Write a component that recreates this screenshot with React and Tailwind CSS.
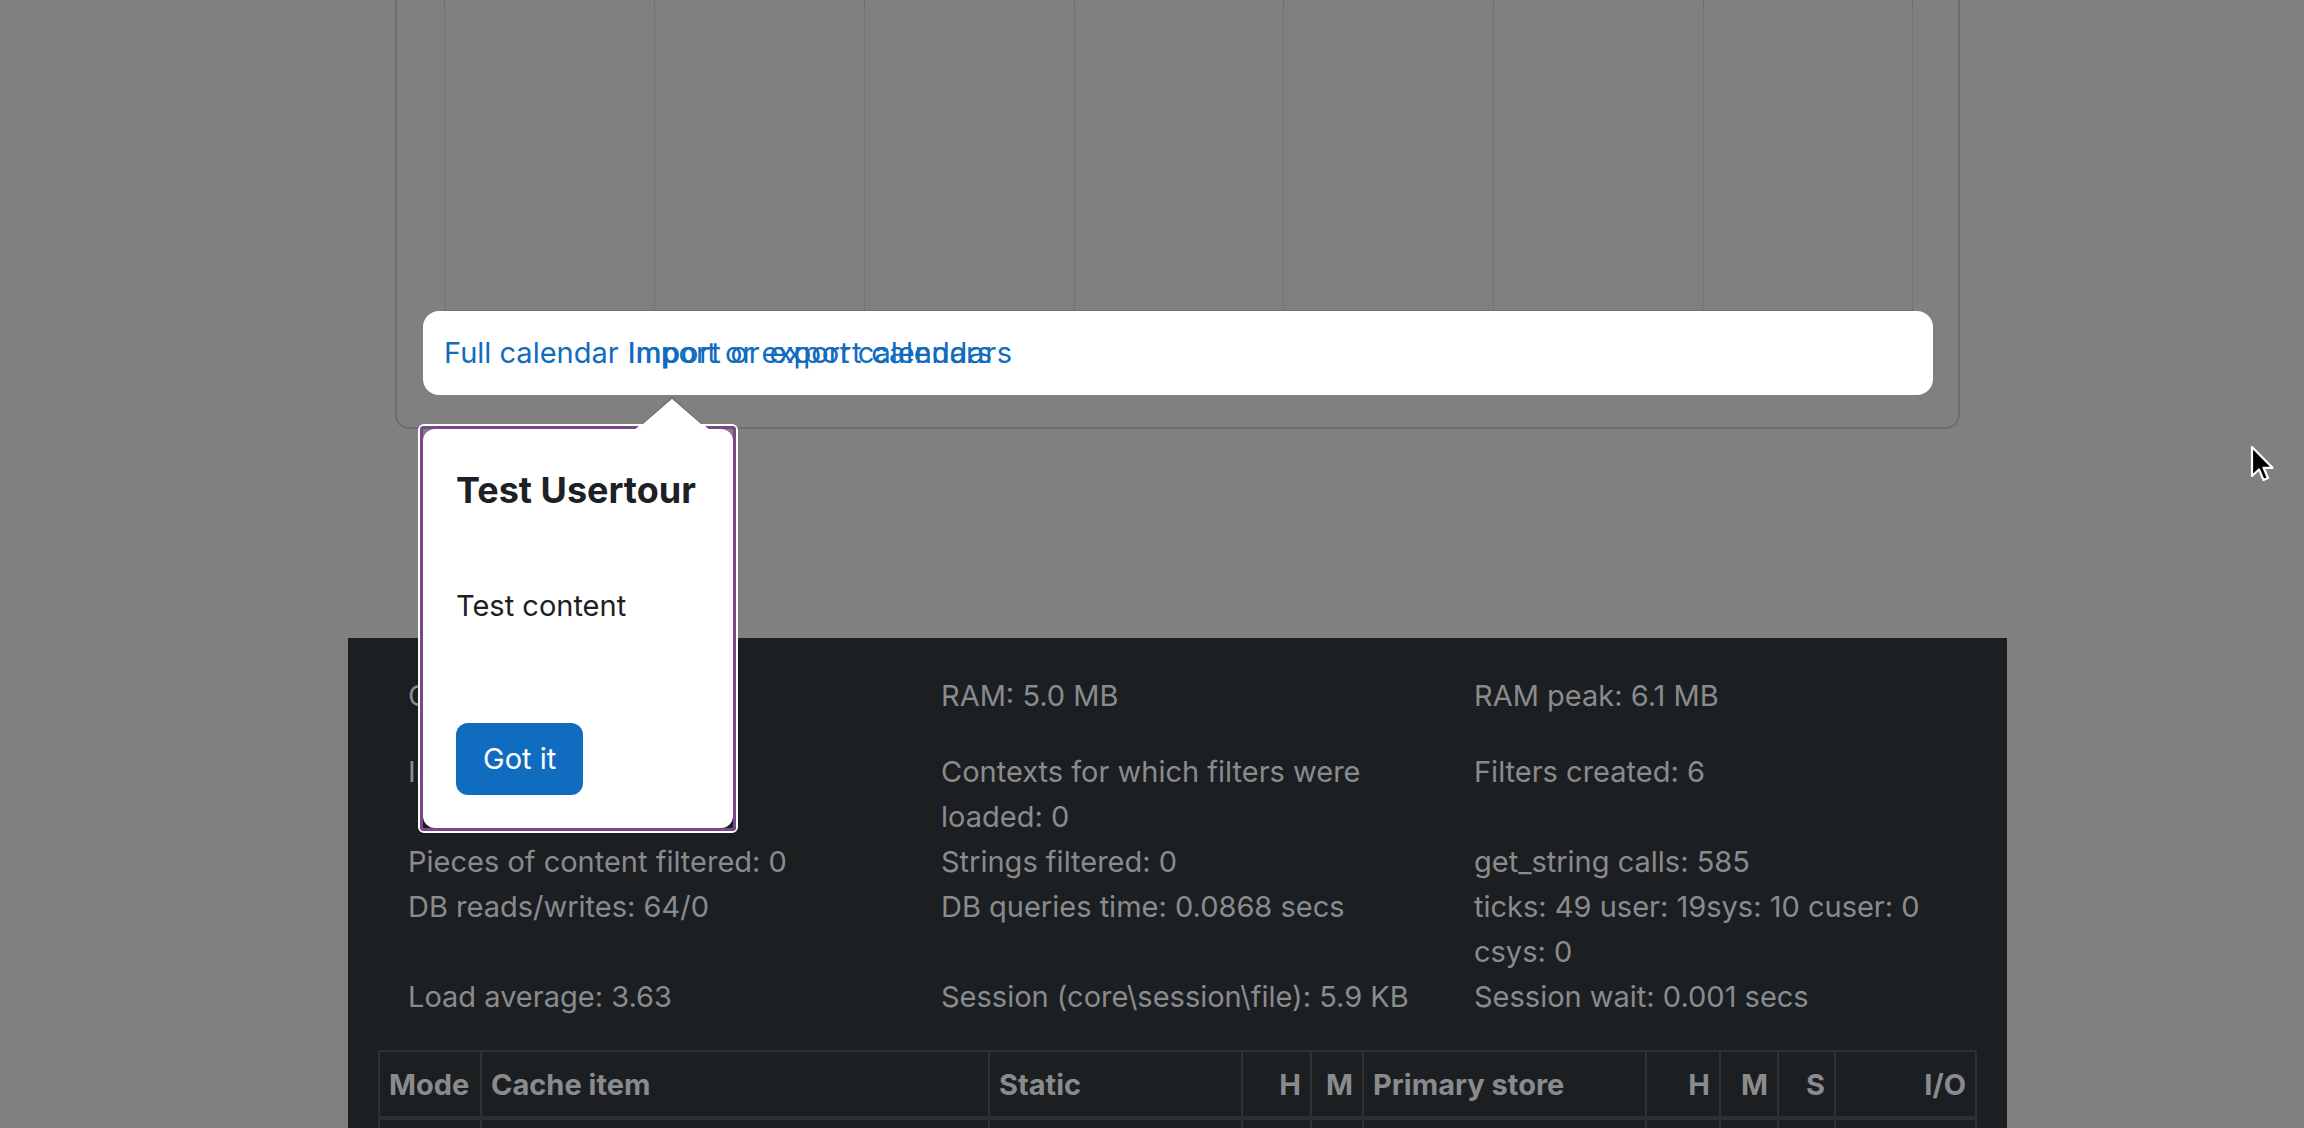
import React from "react";

const perfRows = [
  { cls: "mb-[31px]", cells: [["CPU time: 0.40 secs"], ["RAM: 5.0 MB"], ["RAM peak: 6.1 MB"]] },
  { cls: "", cells: [["Included 1102 files"], ["Contexts for which filters were", "loaded: 0"], ["Filters created: 6"]] },
  { cls: "", cells: [["Pieces of content filtered: 0"], ["Strings filtered: 0"], ["get_string calls: 585"]] },
  { cls: "", cells: [["DB reads/writes: 64/0"], ["DB queries time: 0.0868 secs"], ["ticks: 49 user: 19sys: 10 cuser: 0", "csys: 0"]] },
  { cls: "", cells: [["Load average: 3.63"], ["Session (core\\session\\file): 5.9 KB"], ["Session wait: 0.001 secs"]] },
];

const cacheCols = [
  { label: "Mode", w: "w-[102px]", align: "text-left" },
  { label: "Cache item", w: "w-[508px]", align: "text-left" },
  { label: "Static", w: "w-[253px]", align: "text-left" },
  { label: "H", w: "w-[69px]", align: "text-right" },
  { label: "M", w: "w-[52px]", align: "text-right" },
  { label: "Primary store", w: "w-[283px]", align: "text-left" },
  { label: "H", w: "w-[74px]", align: "text-right" },
  { label: "M", w: "w-[58px]", align: "text-right" },
  { label: "S", w: "w-[57px]", align: "text-right" },
  { label: "I/O", w: "w-[141px]", align: "text-right" },
];

function CalendarBlock() {
  return (
    <div className="ml-[395px] w-[1565px] h-[429px] border-x-2 border-b-2 border-[#6e6e6e] rounded-b-[14px]">
      {/* month grid, only the lower part shows */}
      <div className="ml-[47px] w-[1469px] h-[311px] grid grid-cols-7 border-b border-dotted border-[#666666]">
        {[0, 1, 2, 3, 4, 5, 6].map((i) => (
          <div
            key={i}
            className={
              "border-l border-dotted border-[#666666] " +
              (i === 6 ? "border-r" : "")
            }
          />
        ))}
      </div>
      {/* highlighted footer links */}
      <div className="ml-[26px] w-[1510px] h-[84px] bg-white rounded-[16px] flex items-center pl-[21px] text-[29px] text-[#0f6cbf]">
        <span>Full calendar</span>
        <span className="relative ml-[9px]">
          <span>Import or export calendars</span>
          <span className="absolute left-0 top-0 whitespace-nowrap tracking-[0.8px]">
            Import or export calendars
          </span>
        </span>
      </div>
    </div>
  );
}

function PerfInfo() {
  return (
    <div className="mt-[209px] ml-[348px] w-[1659px] bg-[#1c1f22] pt-[35px] text-[29px] leading-[45px] text-[#8a8b8d]">
      <div className="pl-[60px]">
        {perfRows.map((row, r) => (
          <div key={r} className={"grid grid-cols-[533px_533px_533px] " + row.cls}>
            {row.cells.map((lines, c) => (
              <div key={c}>
                {lines.map((l, k) => (
                  <div key={k} className="whitespace-nowrap">{l}</div>
                ))}
              </div>
            ))}
          </div>
        ))}
      </div>

      <table className="mt-[31px] ml-[30px] w-[1598px] table-fixed border-collapse">
        <thead>
          <tr className="h-[67px]">
            {cacheCols.map((col, i) => (
              <th
                key={i}
                className={
                  col.w +
                  " " +
                  col.align +
                  " border-2 border-b-4 border-[#2d3034] px-[9px] font-bold text-[29px] text-[#8a8b8d]"
                }
              >
                {col.label}
              </th>
            ))}
          </tr>
        </thead>
        <tbody>
          <tr className="h-[60px]">
            {cacheCols.map((col, i) => (
              <td key={i} className="border-2 border-[#2d3034]" />
            ))}
          </tr>
        </tbody>
      </table>
    </div>
  );
}

function TourStep() {
  return (
    <>
      {/* popover arrow */}
      <svg
        className="absolute left-[630px] top-[397px] z-20"
        width="84"
        height="36"
        viewBox="0 0 84 36"
      >
        <polygon points="42,1 3,34 81,34" fill="#ffffff" />
        <path d="M12 27 L42 1 L72 27" fill="none" stroke="#6b6b6b" strokeWidth="1.2" />
      </svg>

      <div className="absolute left-[418px] top-[424px] w-[320px] h-[409px] z-10 rounded-[6px] border-2 border-white">
        <div className="w-full h-full rounded-[4px] border-[3px] border-[#7a4789]">
          <div className="w-full h-full bg-white rounded-[12px] px-[33px] pt-[40px] text-[#1d2125]">
            <h3 className="text-[36px] leading-[43px] font-bold">Test Usertour</h3>
            <p className="mt-[71px] text-[29px] leading-[45px]">Test content</p>
            <button className="mt-[95px] h-[72px] px-[27px] rounded-[12px] bg-[#0f6cbf] text-white text-[29px]">
              Got it
            </button>
          </div>
        </div>
      </div>
    </>
  );
}

function Pointer() {
  return (
    <svg
      className="absolute left-[2249px] top-[445px] z-30"
      width="28"
      height="42"
      viewBox="0 0 28 42"
    >
      <path
        d="M3 2 L3 31 L10 24.5 L14.5 35 L19 33 L14.5 22.8 L23.5 22.8 Z"
        fill="#000000"
        stroke="#ffffff"
        strokeWidth="2.2"
        strokeLinejoin="round"
      />
    </svg>
  );
}

export default function App() {
  return (
    <div className="relative w-full h-[1128px] overflow-hidden bg-[#808080] font-['Inter','Noto_Sans',sans-serif]">
      <CalendarBlock />
      <PerfInfo />
      <TourStep />
      <Pointer />
    </div>
  );
}
